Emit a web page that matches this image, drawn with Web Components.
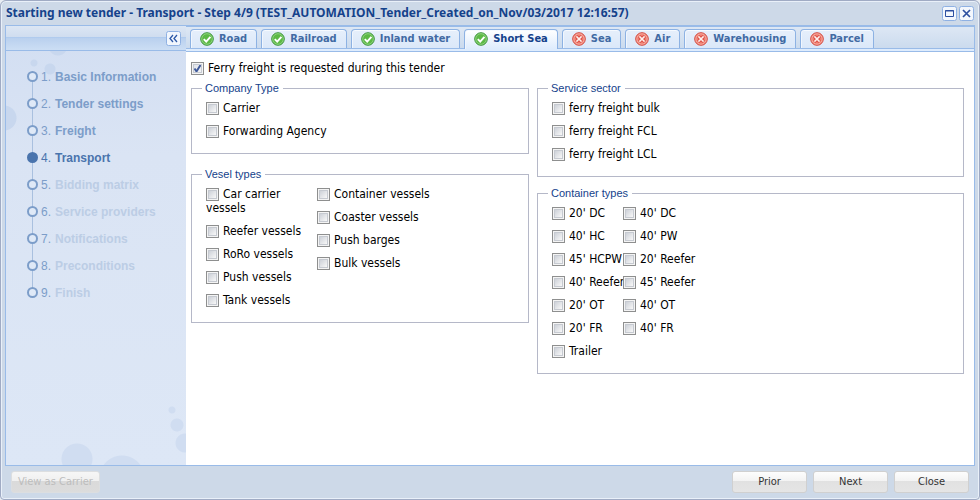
<!DOCTYPE html>
<html lang="en">
<head>
<meta charset="utf-8">
<title>Starting new tender</title>
<style>
html, body { margin: 0; height: 100%; }
body { background: #e9edf3; --ui: "DejaVu Sans Condensed", "DejaVu Sans", sans-serif; font: 12px/14px var(--ui); color: #000; }
.lanes { display: grid; grid-template-columns: 338fr 427fr; gap: 8px; align-items: start; }
.lane { display: grid; gap: 14px; padding-top: 6px; }
.lane.tight { gap: 10px; }
.cols { display: flex; }
.vessel { width: 111px; }
.vessel + .vessel { width: 130px; }
.container { width: 71px; }
</style>
</head>
<body>
<tender-window caption="Starting new tender - Transport - Step 4/9 (TEST_AUTOMATION_Tender_Created_on_Nov/03/2017 12:16:57)">
  <step-list slot="side">
    <step-item n="1" state="done">Basic Information</step-item>
    <step-item n="2" state="done">Tender settings</step-item>
    <step-item n="3" state="done">Freight</step-item>
    <step-item n="4" state="current">Transport</step-item>
    <step-item n="5">Bidding matrix</step-item>
    <step-item n="6">Service providers</step-item>
    <step-item n="7">Notifications</step-item>
    <step-item n="8">Preconditions</step-item>
    <step-item n="9">Finish</step-item>
  </step-list>
  <tab-strip slot="tabs">
    <tab-item ok>Road</tab-item>
    <tab-item ok>Railroad</tab-item>
    <tab-item ok>Inland water</tab-item>
    <tab-item ok active>Short Sea</tab-item>
    <tab-item>Sea</tab-item>
    <tab-item>Air</tab-item>
    <tab-item>Warehousing</tab-item>
    <tab-item>Parcel</tab-item>
  </tab-strip>
  <check-field checked>Ferry freight is requested during this tender</check-field>
  <div class="lanes">
    <div class="lane">
      <field-group caption="Company Type">
        <check-field>Carrier</check-field>
        <check-field>Forwarding Agency</check-field>
      </field-group>
      <field-group caption="Vesel types">
        <div class="cols">
          <div class="vessel">
            <check-field>Car carrier vessels</check-field>
            <check-field>Reefer vessels</check-field>
            <check-field>RoRo vessels</check-field>
            <check-field>Push vessels</check-field>
            <check-field>Tank vessels</check-field>
          </div>
          <div class="vessel">
            <check-field>Container vessels</check-field>
            <check-field>Coaster vessels</check-field>
            <check-field>Push barges</check-field>
            <check-field>Bulk vessels</check-field>
          </div>
        </div>
      </field-group>
    </div>
    <div class="lane tight">
      <field-group caption="Service sector">
        <check-field>ferry freight bulk</check-field>
        <check-field>ferry freight FCL</check-field>
        <check-field>ferry freight LCL</check-field>
      </field-group>
      <field-group caption="Container types">
        <div class="cols">
          <div class="container">
            <check-field nowrap>20' DC</check-field>
            <check-field nowrap>40' HC</check-field>
            <check-field nowrap>45' HCPW</check-field>
            <check-field nowrap>40' Reefer</check-field>
            <check-field nowrap>20' OT</check-field>
            <check-field nowrap>20' FR</check-field>
            <check-field nowrap>Trailer</check-field>
          </div>
          <div class="container">
            <check-field nowrap>40' DC</check-field>
            <check-field nowrap>40' PW</check-field>
            <check-field nowrap>20' Reefer</check-field>
            <check-field nowrap>45' Reefer</check-field>
            <check-field nowrap>40' OT</check-field>
            <check-field nowrap>40' FR</check-field>
          </div>
        </div>
      </field-group>
    </div>
  </div>
  <push-button slot="foot-left" disabled>View as Carrier</push-button>
  <push-button slot="foot">Prior</push-button>
  <push-button slot="foot">Next</push-button>
  <push-button slot="foot">Close</push-button>
</tender-window>

<script>
const define = (name, render) => customElements.define(name, class extends HTMLElement {
  constructor() { super(); this.attachShadow({ mode: 'open' }); }
  connectedCallback() { this.shadowRoot.innerHTML = render(this); }
});

define('tender-window', el => `
<style>
:host { display: flex; flex-direction: column; min-height: 100vh; box-sizing: border-box; padding: 0 3px; border: 1px solid #a0abc4; border-radius: 6px 6px 4px 4px; background: #cdd9e8; box-shadow: inset 0 0 0 1px #e9f0f9; }
header { display: flex; align-items: center; min-height: 24px; padding: 0 2px; gap: 2px; }
h1 { flex: 1; margin: 0; font: bold 12px/18px "Noto Sans", sans-serif; color: #15428b; }
button { padding: 0; border: 0; background: none; display: block; height: 15px; width: 15px; }
svg { display: block; }
main { flex: 1; display: grid; grid-template-columns: 180px 1fr; border: 1px solid #99bbe8; margin: 0 1px; }
aside, section { display: flex; flex-direction: column; min-width: 0; }
aside {
  --b: #c8d7ee;
  --c: #d0ddf1;
  background:
    radial-gradient(circle at 52px 20px, var(--b) 9px, transparent 10px),
    radial-gradient(circle at 28px 37px, var(--b) 3px, transparent 4px),
    radial-gradient(circle at 44px 43px, var(--b) 5px, transparent 6px),
    radial-gradient(circle at -2px 92px, var(--b) 12px, transparent 13px),
    radial-gradient(circle at 71px calc(100% - 6px), var(--c) 15px, transparent 16px),
    radial-gradient(circle at 116px calc(100% + 13px), var(--c) 22px, transparent 23px),
    radial-gradient(circle at 166px calc(100% - 55px), var(--c) 3px, transparent 4px),
    radial-gradient(circle at 171px calc(100% - 40px), var(--c) 6px, transparent 7px),
    radial-gradient(circle at 179px calc(100% - 22px), var(--c) 9px, transparent 10px),
    linear-gradient(#d2def2, #dae4f4 130px, #dde7f6);
}
.bar { height: 24px; display: flex; align-items: center; justify-content: flex-end; padding-right: 5px; border-bottom: 1px solid #99bbe8; background: linear-gradient(#dce6f4, #cfddef 11px, #b0cbee 11px, #b0cbee 12px, #b9d0ee 12px, #ccdef4); }
section { background: #fff; }
.body { padding: 5px 10px 10px 5px; }
.body ::slotted(check-field) { margin-bottom: -4px; }
footer { display: flex; justify-content: space-between; padding: 5px 7px 6px; }
footer div { display: flex; gap: 6px; }
</style>
<header>
  <h1>${el.getAttribute('caption')}</h1>
  <button aria-label="Maximize"><svg width="15" height="15"><rect x=".5" y=".5" width="14" height="14" rx="2" fill="#f3f7fd" stroke="#8fb1e3"/><path d="M3.500 4.500h8v6h-8zM3 5h9" fill="none" stroke="#2c4fa0"/></svg></button>
  <button aria-label="Close window"><svg width="15" height="15"><rect x=".5" y=".5" width="14" height="14" rx="2" fill="#f3f7fd" stroke="#8fb1e3"/><path d="M4 4l7 7M11 4l-7 7" stroke="#2c4fa0" stroke-width="1.700"/></svg></button>
</header>
<main>
  <aside>
    <div class="bar"><button aria-label="Collapse panel"><svg width="15" height="15"><rect x=".5" y=".5" width="14" height="14" rx="2" fill="#f1f6fd" stroke="#8fb1e3"/><path d="M7 4L4 7.500l3 3.500M11 4L8 7.500l3 3.500" fill="none" stroke="#2c58a8" stroke-width="1.300"/></svg></button></div>
    <slot name="side"></slot>
  </aside>
  <section>
    <slot name="tabs"></slot>
    <div class="body"><slot></slot></div>
  </section>
</main>
<footer><div><slot name="foot-left"></slot></div><div><slot name="foot"></slot></div></footer>`);

define('step-list', () => `
<style>
:host { display: block; padding: 12px 0 0 21px; }
div { background: linear-gradient(#a9c0df, #a9c0df) 5px 14px / 1px calc(100% - 27px) no-repeat; }
</style><div role="list"><slot></slot></div>`);

define('step-item', el => `
<style>
:host { display: block; --ring: #7c9dc9; --label: #bccde5; }
:host([state=done]) { --label: #7c9dc9; }
:host([state=current]) { --ring: #4a74ad; --label: #4a74ad; }
div { display: flex; align-items: center; height: 27px; font: 12px/14px "Liberation Sans", sans-serif; color: #7c9dc9; }
:host([state=current]) div { color: #4a74ad; }
i { box-sizing: border-box; width: 11px; height: 11px; border: 2px solid var(--ring); border-radius: 50%; background: #dfe9f7; margin-right: 3px; }
:host([state=current]) i { background: var(--ring); }
span { width: 14px; }
b { color: var(--label); }
</style><div role="listitem"><i></i><span>${el.getAttribute('n')}.</span><b><slot></slot></b></div>`);

define('tab-strip', () => `
<style>
:host { display: block; border-bottom: 1px solid #99bbe8; background: #deecfd; }
nav { display: flex; gap: 4px; padding: 2px 4px 0; height: 19px; border-top: 1px solid #99bbe8; border-bottom: 1px solid #99bbe8; margin-bottom: 2px; background: linear-gradient(#dde7f4, #cbdbee); }
</style><nav role="tablist"><slot></slot></nav>`);

define('tab-item', el => `
<style>
:host { display: block; }
button { display: flex; align-items: center; gap: 5px; box-sizing: border-box; height: 19px; padding: 0 9px; border: 1px solid #8db2e3; border-bottom: 0; border-radius: 4px 4px 0 0; background: linear-gradient(#e6effb, #dbe8f9); box-shadow: inset 0 1px #f6faff, inset 1px 0 #f1f6fd; font: bold 11px/14px var(--ui); color: #416aa3; white-space: nowrap; }
:host([active]) button { height: 20px; padding-bottom: 1px; margin-bottom: -1px; color: #15428b; background: linear-gradient(#fff, #deecfd); }
svg { flex: none; }
</style>
<button role="tab" aria-selected="${el.hasAttribute('active')}">
${el.hasAttribute('ok')
  ? `<svg width="14" height="14" viewBox="0 0 14 14"><circle cx="7" cy="7" r="6.300" fill="#5cb946" stroke="#3f9440"/><circle cx="7" cy="7" r="5.300" fill="none" stroke="#9bd98a" stroke-width=".8"/><path d="M3.800 7.200l2.400 2.500 4.200-4.800" fill="none" stroke="#fff" stroke-width="1.900"/></svg>`
  : `<svg width="14" height="14" viewBox="0 0 14 14"><circle cx="7" cy="7" r="6.300" fill="#ee7b6e" stroke="#d24a40"/><circle cx="7" cy="7" r="5.200" fill="none" stroke="#f8b5aa" stroke-width=".8"/><path d="M4.400 4.400l5.200 5.200M9.600 4.400l-5.200 5.200" stroke="#d43f36" stroke-width="3"/><path d="M4.400 4.400l5.200 5.200M9.600 4.400l-5.200 5.200" stroke="#fff0ec" stroke-width="1.500"/></svg>`}
<span><slot></slot></span></button>`);

define('check-field', el => `
<style>
:host { display: block; }
label { display: block; padding: 4px 0 5px; }
:host([nowrap]) label { white-space: nowrap; }
input { appearance: none; box-sizing: border-box; width: 13px; height: 13px; margin: 1px 4px 0 0; padding: 2px; vertical-align: top; border: 1px solid #8e8f8f; background: linear-gradient(135deg, #cdd1d8, #f8f8f8) content-box, #f4f4f4; box-shadow: inset 0 0 0 1px #f4f4f4, inset 0 0 0 2px #c6cad1; }
input:checked { background: url('data:image/svg+xml,<svg xmlns="http://www.w3.org/2000/svg" width="11" height="11"><path d="M2.500 5.500l2 3L8.500 2" fill="none" stroke="%23405a9a" stroke-width="2"/></svg>') center no-repeat border-box, linear-gradient(135deg, #dce0e8, #f8f8f8); }
</style><label><input type="checkbox"${el.hasAttribute('checked') ? ' checked' : ''}><slot></slot></label>`);

define('field-group', el => `
<style>
:host { display: block; }
fieldset { margin: 0; min-width: 0; padding: 3px 10px 10px 14px; border: 1px solid #b5b8c8; }
legend { margin-left: -4px; padding: 0 4px 0 3px; font: 11px/12px "Liberation Sans", sans-serif; color: #15428b; }
</style><fieldset><legend>${el.getAttribute('caption')}</legend><slot></slot></fieldset>`);

define('push-button', el => `
<style>
:host { display: block; }
button { box-sizing: border-box; min-width: 75px; height: 22px; padding: 0 6px; border: 1px solid #d0d0d0; border-radius: 3px; background: linear-gradient(#fdfdfd, #f3f3f3 9px, #e1e1e1 9px, #e5e5e5); font: 11px/14px var(--ui); color: #333; }
button:disabled { color: #bdbdbd; border-color: #dcdee0; background: linear-gradient(#f6f6f6, #f0f0f0 9px, #dadada 9px, #dcdcdc); }
</style><button${el.hasAttribute('disabled') ? ' disabled' : ''}><slot></slot></button>`);
</script>
</body>
</html>
